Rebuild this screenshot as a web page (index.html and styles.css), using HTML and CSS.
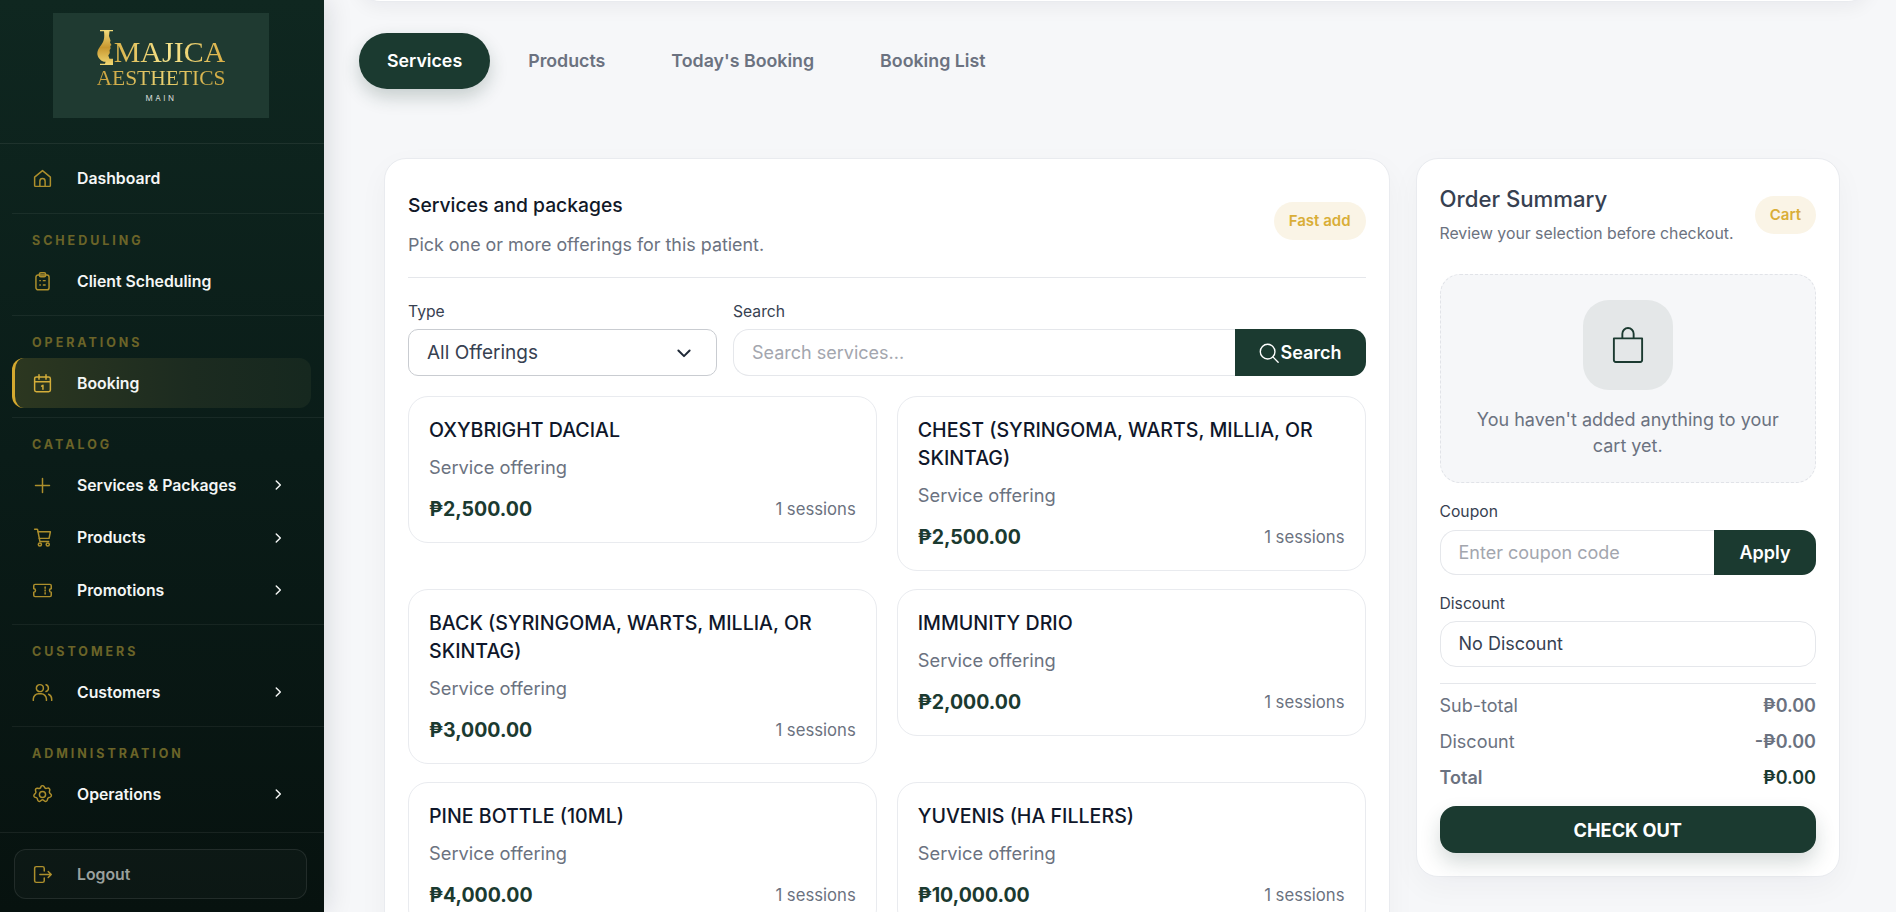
FILE: index.html
```html
<!DOCTYPE html>
<html lang="en">
<head>
    <meta charset="UTF-8">
    <meta name="viewport" content="width=device-width, initial-scale=1.0">
    <title>Booking - Majica Aesthetics</title>
    <link rel="stylesheet" href="styles.css">
</head>
<body>
    <div class="app">
        <aside class="sidebar">
            <div class="brand">
                <div class="brand-logo">
                    <div class="logo-top">
                        <svg class="logo-mark" viewBox="0 0 16 35" aria-hidden="true">
                            <defs>
                                <linearGradient id="gold" x1="0" y1="0" x2="0" y2="1">
                                    <stop offset="0" stop-color="#f3dc7c"/>
                                    <stop offset="0.5" stop-color="#c8972f"/>
                                    <stop offset="1" stop-color="#f0d873"/>
                                </linearGradient>
                            </defs>
                            <path fill="url(#gold)" d="M3 0h13v1.200h-3.500L12 6l1.500 4.500-.5 2 1.500 2.500-1.200 1 .3 2.500-1 1.500.2 3-1.500 2.500 1.200 3.300H16V35H3v-1.200h5l.6-2C5 32 1.500 29 .5 25 -.5 20 3.500 16.500 6 12c1.300-2.500 1.500-6.500 1-10.800H3z"/>
                        </svg>
                        <span class="logo-word">MAJICA</span>
                    </div>
                    <div class="logo-word logo-sub">AESTHETICS</div>
                    <div class="logo-branch">MAIN</div>
                </div>
            </div>

            <nav class="side-nav">
                <div class="nav-group nav-first">
                    <a class="nav-item">
                        <svg class="nav-icon" viewBox="0 0 24 24"><path d="M3 10.500 12 3l9 7.500V20a1 1 0 0 1-1 1H4a1 1 0 0 1-1-1z"/><path d="M9 21v-6a3 3 0 0 1 6 0v6"/></svg>
                        <span>Dashboard</span>
                    </a>
                </div>
                <div class="nav-group">
                    <div class="nav-label">SCHEDULING</div>
                    <a class="nav-item">
                        <svg class="nav-icon" viewBox="0 0 24 24"><rect x="4.500" y="4.500" width="15" height="17" rx="2.500"/><rect x="8.500" y="2" width="7" height="4.500" rx="1.500"/><path d="M9 11h.5M13 11h2M9 16h.5M13 16h2"/></svg>
                        <span>Client Scheduling</span>
                    </a>
                </div>
                <div class="nav-group">
                    <div class="nav-label">OPERATIONS</div>
                    <a class="nav-item active">
                        <svg class="nav-icon" viewBox="0 0 24 24"><rect x="3" y="4.500" width="18" height="17" rx="2"/><path d="M3 10h18M8 2v5M16 2v5M11 15l1.500-1v4.500"/></svg>
                        <span>Booking</span>
                    </a>
                </div>
                <div class="nav-group">
                    <div class="nav-label">CATALOG</div>
                    <a class="nav-item">
                        <svg class="nav-icon" viewBox="0 0 24 24"><path d="M12 4v16M4 12h16"/></svg>
                        <span>Services &amp; Packages</span>
                        <svg class="nav-chevron" viewBox="0 0 24 24"><path d="m9 5 7 7-7 7"/></svg>
                    </a>
                    <a class="nav-item">
                        <svg class="nav-icon" viewBox="0 0 24 24"><path d="M3 2.500h2.500a1 1 0 0 1 1 .8L9 16.500h10"/><path d="M6.800 5.500H21l-1.500 7.500H8.300"/><circle cx="9" cy="20" r="1.800"/><circle cx="18" cy="20" r="1.800"/></svg>
                        <span>Products</span>
                        <svg class="nav-chevron" viewBox="0 0 24 24"><path d="m9 5 7 7-7 7"/></svg>
                    </a>
                    <a class="nav-item">
                        <svg class="nav-icon" viewBox="0 0 24 24"><path d="M3.500 5h17A1.500 1.500 0 0 1 22 6.500V10a2 2 0 0 0 0 4v3.500a1.500 1.500 0 0 1-1.500 1.500h-17A1.500 1.500 0 0 1 2 17.500V14a2 2 0 0 0 0-4V6.500A1.500 1.500 0 0 1 3.500 5z"/><path d="M15 8v1.500M15 11.300v1.400M15 14.500V16"/></svg>
                        <span>Promotions</span>
                        <svg class="nav-chevron" viewBox="0 0 24 24"><path d="m9 5 7 7-7 7"/></svg>
                    </a>
                </div>
                <div class="nav-group">
                    <div class="nav-label">CUSTOMERS</div>
                    <a class="nav-item">
                        <svg class="nav-icon" viewBox="0 0 24 24"><circle cx="9" cy="7" r="4"/><path d="M1.500 21v-1.500a6 6 0 0 1 6-6h3a6 6 0 0 1 6 6V21"/><path d="M16 3.200a4 4 0 0 1 0 7.600M19 14a6 6 0 0 1 3.500 5.500V21"/></svg>
                        <span>Customers</span>
                        <svg class="nav-chevron" viewBox="0 0 24 24"><path d="m9 5 7 7-7 7"/></svg>
                    </a>
                </div>
                <div class="nav-group nav-last">
                    <div class="nav-label">ADMINISTRATION</div>
                    <a class="nav-item">
                        <svg class="nav-icon" viewBox="0 0 24 24"><circle cx="12" cy="12" r="3.500"/><path d="M10.300 2.800a2 2 0 0 1 3.400 0l.8 1.300a2 2 0 0 0 2 .9l1.500-.3a2 2 0 0 1 2.300 2.500l-.4 1.500a2 2 0 0 0 .6 2l1.100 1a2 2 0 0 1-.8 3.300l-1.500.4a2 2 0 0 0-1.400 1.500l-.4 1.500a2 2 0 0 1-3.200 1l-1.200-1a2 2 0 0 0-2.200 0l-1.200 1a2 2 0 0 1-3.200-1l-.4-1.500A2 2 0 0 0 5 15.600l-1.500-.4a2 2 0 0 1-.8-3.300l1.100-1a2 2 0 0 0 .6-2l-.4-1.500a2 2 0 0 1 2.300-2.500l1.500.3a2 2 0 0 0 2-.9z"/></svg>
                        <span>Operations</span>
                        <svg class="nav-chevron" viewBox="0 0 24 24"><path d="m9 5 7 7-7 7"/></svg>
                    </a>
                </div>
            </nav>

            <div class="side-footer">
                <a class="logout-btn">
                    <svg class="nav-icon" viewBox="0 0 24 24"><path d="M14 8V5a2 2 0 0 0-2-2H5a2 2 0 0 0-2 2v14a2 2 0 0 0 2 2h7a2 2 0 0 0 2-2v-3"/><path d="M9 12h13M18.500 8.500 22 12l-3.500 3.500"/></svg>
                    <span>Logout</span>
                </a>
            </div>
        </aside>

        <main class="main">
            <div class="topbar"></div>

            <div class="tabs">
                <a class="tab active">Services</a>
                <a class="tab">Products</a>
                <a class="tab">Today's Booking</a>
                <a class="tab">Booking List</a>
            </div>

            <div class="content">
                <section class="panel services-panel">
                    <div class="panel-head">
                        <div>
                            <h2 class="panel-title">Services and packages</h2>
                            <p class="panel-sub">Pick one or more offerings for this patient.</p>
                        </div>
                        <span class="badge head-badge">Fast add</span>
                    </div>

                    <div class="filters">
                        <div class="filter-type">
                            <label class="field-label">Type</label>
                            <div class="select-box">
                                <span>All Offerings</span>
                                <svg class="select-caret" viewBox="0 0 16 16"><path d="m3.500 6 4.500 4.500L12.500 6"/></svg>
                            </div>
                        </div>
                        <div class="filter-search">
                            <label class="field-label">Search</label>
                            <div class="input-group">
                                <input class="text-input" type="text" placeholder="Search services...">
                                <button class="group-btn search-btn">
                                    <svg class="search-icon" viewBox="0 0 24 24"><circle cx="10.500" cy="10.500" r="8"/><path d="m16.500 16.500 5.500 5.500"/></svg>Search
                                </button>
                            </div>
                        </div>
                    </div>

                    <div class="offer-grid">
                        <div class="offer-card">
                            <h3>OXYBRIGHT DACIAL</h3>
                            <p class="offer-kind">Service offering</p>
                            <div class="offer-foot"><strong>₱2,500.00</strong><span>1 sessions</span></div>
                        </div>
                        <div class="offer-card">
                            <h3>CHEST (SYRINGOMA, WARTS, MILLIA, OR SKINTAG)</h3>
                            <p class="offer-kind">Service offering</p>
                            <div class="offer-foot"><strong>₱2,500.00</strong><span>1 sessions</span></div>
                        </div>
                        <div class="offer-card">
                            <h3>BACK (SYRINGOMA, WARTS, MILLIA, OR SKINTAG)</h3>
                            <p class="offer-kind">Service offering</p>
                            <div class="offer-foot"><strong>₱3,000.00</strong><span>1 sessions</span></div>
                        </div>
                        <div class="offer-card">
                            <h3>IMMUNITY DRIO</h3>
                            <p class="offer-kind">Service offering</p>
                            <div class="offer-foot"><strong>₱2,000.00</strong><span>1 sessions</span></div>
                        </div>
                        <div class="offer-card">
                            <h3>PINE BOTTLE (10ML)</h3>
                            <p class="offer-kind">Service offering</p>
                            <div class="offer-foot"><strong>₱4,000.00</strong><span>1 sessions</span></div>
                        </div>
                        <div class="offer-card">
                            <h3>YUVENIS (HA FILLERS)</h3>
                            <p class="offer-kind">Service offering</p>
                            <div class="offer-foot"><strong>₱10,000.00</strong><span>1 sessions</span></div>
                        </div>
                    </div>
                </section>

                <aside class="panel summary-panel">
                    <div class="summary-head">
                        <div>
                            <h2 class="summary-title">Order Summary</h2>
                            <p class="summary-sub">Review your selection before checkout.</p>
                        </div>
                        <span class="badge">Cart</span>
                    </div>

                    <div class="empty-cart">
                        <div class="empty-icon">
                            <svg viewBox="0 0 34 38"><path d="M2 12h30v23a2 2 0 0 1-2 2H4a2 2 0 0 1-2-2z"/><path d="M11 12V7a6 6 0 0 1 12 0v5"/></svg>
                        </div>
                        <p>You haven't added anything to your cart yet.</p>
                    </div>

                    <label class="field-label coupon-label">Coupon</label>
                    <div class="input-group coupon-group">
                        <input class="text-input" type="text" placeholder="Enter coupon code">
                        <button class="group-btn apply-btn">Apply</button>
                    </div>

                    <label class="field-label discount-label">Discount</label>
                    <div class="discount-box">No Discount</div>

                    <div class="totals">
                        <div class="total-row"><span>Sub-total</span><b>₱0.00</b></div>
                        <div class="total-row"><span>Discount</span><b>-₱0.00</b></div>
                        <div class="total-row grand"><span>Total</span><b>₱0.00</b></div>
                    </div>

                    <button class="checkout-btn">CHECK OUT</button>
                </aside>
            </div>
        </main>
    </div>
</body>
</html>
```

FILE: styles.css
```css
* {
    box-sizing: border-box;
}

html, body {
    height: 100%;
}

body {
    margin: 0;
    overflow: hidden;
    background: #f6f7f9;
    font-family: "Inter", "Noto Sans", sans-serif;
    color: #111827;
}

.app {
    display: flex;
    height: 912px;
    overflow: hidden;
}

/* sidebar */
.sidebar {
    width: 324px;
    flex: none;
    display: flex;
    flex-direction: column;
    background: linear-gradient(180deg, #0f2720 0%, #0a1c18 50%, #07120f 100%);
    box-shadow: 4px 0 24px rgba(17, 24, 39, 0.12);
    position: relative;
    z-index: 2;
}

.brand {
    height: 144px;
    flex: none;
    padding: 13px 2px 0 0;
    display: flex;
    justify-content: center;
    align-items: flex-start;
    border-bottom: 1px solid rgba(255, 255, 255, 0.07);
}

.brand-logo {
    width: 216px;
    height: 105px;
    background: #1f3a31;
    display: flex;
    flex-direction: column;
    align-items: center;
    padding-top: 16px;
}

.logo-top {
    display: flex;
    align-items: flex-end;
    height: 36px;
}

.logo-mark {
    width: 16px;
    height: 35px;
    margin-right: 1px;
}

.logo-word {
    font-family: "Liberation Serif", serif;
    font-size: 30px;
    line-height: 26px;
    background: linear-gradient(90deg, #d9b24a 0%, #f6e58d 50%, #d8ae45 100%);
    -webkit-background-clip: text;
    background-clip: text;
    color: transparent;
}

.logo-sub {
    font-size: 21.500px;
    line-height: 22px;
    margin-top: 2px;
    background: linear-gradient(90deg, #c9a03c 0%, #e9d06f 50%, #d0a840 100%);
    -webkit-background-clip: text;
    background-clip: text;
}

.logo-branch {
    color: #d8dcd8;
    font-size: 8px;
    letter-spacing: 2.500px;
    line-height: 10px;
    margin-top: 3.500px;
}

.side-nav {
    flex: 1;
    min-height: 0;
}

.nav-group {
    margin-left: 12px;
    padding: 18px 0 9px;
    border-bottom: 1px solid rgba(255, 255, 255, 0.06);
}

.nav-first {
    height: 70px;
    padding: 9px 0 0;
}

.nav-last {
    padding-bottom: 13px;
    margin-left: 0;
    padding-left: 12px;
    border-bottom-color: rgba(255, 255, 255, 0.07);
}

.nav-label {
    height: 18px;
    margin: 0 0 6px 20px;
    color: #6b6428;
    font-size: 12.500px;
    line-height: 18px;
    font-weight: 700;
    letter-spacing: 2.950px;
}

.nav-item {
    width: 299px;
    height: 50px;
    display: flex;
    align-items: center;
    padding-left: 19.500px;
    padding-right: 26px;
    color: #f4f6f5;
    font-size: 15.800px;
    font-weight: 600;
    border-radius: 12px;
}

.nav-item + .nav-item {
    margin-top: 2.500px;
}

.nav-item.active {
    background: linear-gradient(90deg, #2c3720 0%, #1c2b20 60%, #16281f 100%);
    border-left: 3px solid #d4a92f;
    padding-left: 16.500px;
}

.nav-icon {
    width: 21px;
    height: 21px;
    flex: none;
    margin-right: 24.500px;
    fill: none;
    stroke: #ad8f2c;
    stroke-width: 1.700;
    stroke-linecap: round;
    stroke-linejoin: round;
}

.nav-item.active .nav-icon {
    stroke: #d4ae3a;
}

.nav-chevron {
    width: 14px;
    height: 14px;
    margin-left: auto;
    fill: none;
    stroke: #f4f6f5;
    stroke-width: 2.500;
    stroke-linecap: round;
    stroke-linejoin: round;
}

.side-footer {
    flex: none;
    padding: 15px 17px 13px 14px;
}

.logout-btn {
    height: 50px;
    display: flex;
    align-items: center;
    padding-left: 16.500px;
    color: #9aa19e;
    font-size: 15.800px;
    font-weight: 600;
    background: rgba(255, 255, 255, 0.025);
    border: 1px solid rgba(255, 255, 255, 0.09);
    border-radius: 12px;
}

/* main area */
.main {
    flex: 1;
    min-width: 0;
    padding: 0 30px 0 34px;
    overflow: hidden;
}

.topbar {
    height: 40px;
    margin: -38px -4px 0 0;
    background: #fff;
    border-bottom: 1px solid #e9ebef;
    border-radius: 0 0 22px 22px;
    box-shadow: 0 6px 18px rgba(17, 24, 39, 0.05);
}

.tabs {
    display: flex;
    gap: 10px;
    margin: 31px 0 0 1px;
}

.tab {
    height: 56px;
    display: flex;
    align-items: center;
    padding: 0 28px 2px;
    border-radius: 28px;
    color: #6b7280;
    font-size: 17.800px;
    font-weight: 600;
}

.tab.active {
    background: #1b3a30;
    color: #fff;
    box-shadow: 0 8px 18px rgba(27, 58, 48, 0.22);
}

.content {
    display: grid;
    grid-template-columns: 1fr 424.500px;
    gap: 26px;
    align-items: start;
    margin-top: 69px;
    padding: 0 26px;
}

.panel {
    background: #fff;
    border: 1px solid #e9ebef;
    border-radius: 22px;
    box-shadow: 0 10px 30px rgba(17, 24, 39, 0.04);
}

.services-panel {
    padding: 33px 23px 24px;
}

.panel-head {
    display: flex;
    justify-content: space-between;
    align-items: center;
    padding-bottom: 20px;
    border-bottom: 1px solid #e5e7eb;
}

.panel-title {
    margin: 0 0 14px;
    font-size: 19.300px;
    line-height: 27px;
    font-weight: 500;
    color: #111827;
}

.panel-sub {
    margin: 0;
    font-size: 17.900px;
    line-height: 24px;
    color: #6b7280;
}

.badge {
    flex: none;
    padding: 0 15px;
    height: 38px;
    line-height: 38px;
    border-radius: 19px;
    background: #faf4e6;
    color: #d9ae37;
    font-size: 15px;
    font-weight: 600;
}

.head-badge {
    margin-bottom: 7px;
}

.filters {
    display: flex;
    gap: 16px;
    margin-top: 24px;
}

.filter-type {
    width: 309px;
    flex: none;
}

.filter-search {
    flex: 1;
}

.field-label {
    display: block;
    margin-bottom: 7px;
    font-size: 15.700px;
    line-height: 20px;
    color: #374151;
}

.select-box {
    height: 47px;
    display: flex;
    justify-content: space-between;
    align-items: center;
    padding: 0 22px 0 18px;
    border: 1px solid #c9ccd1;
    border-radius: 10px;
    font-size: 19px;
    color: #374151;
}

.select-caret {
    width: 20px;
    height: 20px;
    fill: none;
    stroke: #1f2937;
    stroke-width: 1.600;
    stroke-linecap: round;
    stroke-linejoin: round;
}

.input-group {
    display: flex;
    height: 47px;
}

.text-input {
    flex: 1;
    min-width: 0;
    padding: 0 18px;
    border: 1px solid #e5e7eb;
    border-right: 0;
    border-radius: 16px 0 0 16px;
    background: #fff;
    font-family: inherit;
    font-size: 18px;
    outline: none;
}

.text-input::placeholder {
    color: #a3a6ae;
}

.group-btn {
    flex: none;
    border: 0;
    border-radius: 0 14px 14px 0;
    background: #1b3a30;
    color: #fff;
    font-family: inherit;
    font-size: 18px;
    font-weight: 600;
}

.search-btn {
    width: 131px;
    display: flex;
    align-items: center;
    justify-content: center;
}

.search-icon {
    width: 22px;
    height: 22px;
    fill: none;
    stroke: #fff;
    stroke-width: 1.500;
    stroke-linecap: round;
}

.offer-grid {
    display: grid;
    grid-template-columns: 1fr 1fr;
    gap: 18.500px 20px;
    align-items: start;
    margin-top: 20px;
}

.offer-card {
    padding: 19px 20px 18px;
    border: 1px solid #e9ebef;
    border-radius: 20px;
}

.offer-card h3 {
    margin: 0 0 10.500px;
    font-size: 19.600px;
    line-height: 28px;
    font-weight: 500;
    color: #0f172a;
}

.offer-kind {
    margin: 0 0 15px;
    font-size: 18.300px;
    line-height: 24px;
    color: #6b7280;
}

.offer-foot {
    display: flex;
    justify-content: space-between;
    align-items: center;
    line-height: 30px;
}

.offer-foot strong {
    font-size: 19.500px;
    font-weight: 700;
    color: #1b3a30;
}

.offer-foot span {
    font-size: 16.700px;
    color: #6b7280;
}

.summary-panel {
    padding: 25px 23px 23px;
}

.summary-head {
    display: flex;
    justify-content: space-between;
    align-items: center;
}

.summary-title {
    margin: 0 0 9px;
    font-size: 22.200px;
    line-height: 30px;
    font-weight: 500;
    color: #374151;
}

.summary-sub {
    margin: 0;
    font-size: 15.800px;
    line-height: 22px;
    color: #6b7280;
}

.empty-cart {
    height: 209px;
    margin-top: 29px;
    padding-top: 25px;
    text-align: center;
    background: #f6f7f9;
    border: 1px dashed #e1e3e8;
    border-radius: 20px;
}

.empty-icon {
    width: 90px;
    height: 90px;
    margin: 0 auto 17px;
    display: flex;
    align-items: center;
    justify-content: center;
    background: #e4e7e8;
    border-radius: 26px;
}

.empty-icon svg {
    width: 32px;
    height: 36px;
    fill: none;
    stroke: #1b3a30;
    stroke-width: 2;
    stroke-linejoin: round;
}

.empty-cart p {
    margin: 0 auto;
    width: 330px;
    font-size: 18px;
    line-height: 26px;
    color: #6b7280;
}

.coupon-label {
    margin-top: 19px;
    margin-bottom: 8px;
}

.coupon-group {
    height: 45px;
}

.apply-btn {
    width: 102px;
}

.discount-label {
    margin: 19px 0 7px;
}

.discount-box {
    height: 46px;
    line-height: 44px;
    padding: 0 18px;
    border: 1px solid #e5e7eb;
    border-radius: 16px;
    font-size: 18px;
    color: #374151;
}

.totals {
    margin-top: 16px;
    padding-top: 10px;
    border-top: 1px solid #e5e7eb;
}

.total-row {
    display: flex;
    justify-content: space-between;
    height: 24px;
    line-height: 24px;
    font-size: 18px;
    color: #6b7280;
}

.total-row + .total-row {
    margin-top: 12px;
}

.total-row b {
    font-weight: 600;
}

.total-row.grand span {
    font-weight: 600;
}

.total-row.grand b {
    color: #1b3a30;
}

.checkout-btn {
    display: block;
    width: 100%;
    height: 47px;
    margin-top: 16px;
    border: 0;
    border-radius: 16px;
    background: #1b3a30;
    color: #fff;
    font-family: inherit;
    font-size: 18.200px;
    font-weight: 700;
    box-shadow: 0 10px 20px rgba(27, 58, 48, 0.18);
}
```
